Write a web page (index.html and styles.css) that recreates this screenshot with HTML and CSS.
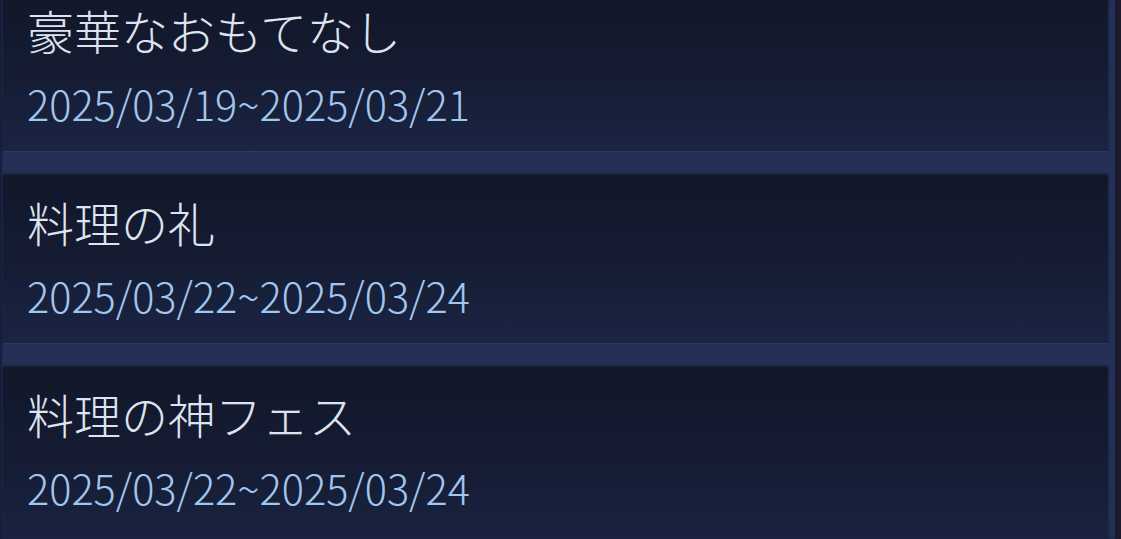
FILE: index.html
```html
<!DOCTYPE html>
<html lang="ja">
<head>
    <meta charset="UTF-8">
    <meta name="viewport" content="width=device-width, initial-scale=1.0">
    <title>イベント一覧</title>
    <link rel="stylesheet" href="styles.css">
</head>
<body>
    <!-- Event list -->
    <div class="panel">
        <div class="event-list">
            <div class="event-card">
                <div class="event-title">豪華なおもてなし</div>
                <div class="event-date">2025/03/19~2025/03/21</div>
            </div>
            <div class="event-card">
                <div class="event-title">料理の礼</div>
                <div class="event-date">2025/03/22~2025/03/24</div>
            </div>
            <div class="event-card">
                <div class="event-title">料理の神フェス</div>
                <div class="event-date">2025/03/22~2025/03/24</div>
            </div>
        </div>
    </div>
</body>
</html>
```

FILE: styles.css
```css
body {
    margin: 0;
    padding: 0;
    height: 539px;
    overflow: hidden;
    background-color: #1a1a2b;
    font-family: "Noto Sans CJK JP", "Noto Sans", sans-serif;
}

.panel {
    height: 100%;
    margin-right: 6px;
    padding: 0 7px 0 3px;
    background-color: #243055;
    box-shadow: inset 2px 0 2px rgba(10, 14, 30, 0.5);
}

.event-list {
    display: flex;
    flex-direction: column;
    gap: 23px;
}

.event-card {
    height: 169px;
    box-sizing: border-box;
    padding: 20px 24px 0;
    background: linear-gradient(180deg, #121729 0%, #151c33 50%, #1a2543 100%);
    border-bottom: 1px solid #2b3862;
    box-shadow: 0 -1px 2px rgba(8, 10, 22, 0.6);
}

/* first card is scrolled partly out of view */
.event-card:first-child {
    height: 152px;
    padding-top: 3px;
}

.event-card:last-child {
    height: 190px;
}

.event-title {
    font-size: 47px;
    font-weight: 300;
    line-height: 54px;
    color: #dde4f0;
}

.event-date {
    font-size: 41.5px;
    font-weight: 300;
    line-height: 56px;
    margin-top: 18px;
    color: #a2c6ee;
}
```
